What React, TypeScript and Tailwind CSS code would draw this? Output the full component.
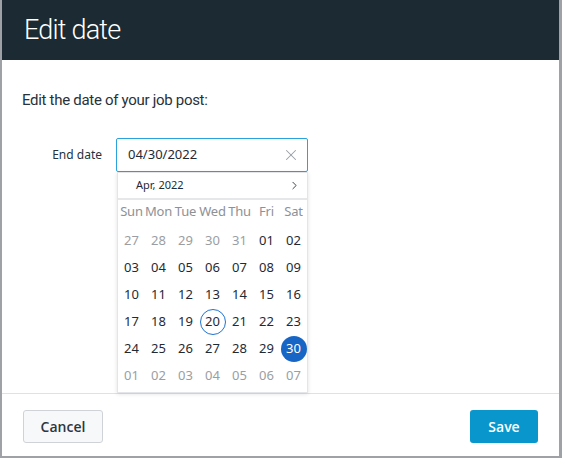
import { X, ChevronRight } from "lucide-react";

type Day = { n: string; muted?: boolean; today?: boolean; selected?: boolean };

const WEEKDAYS = ["Sun", "Mon", "Tue", "Wed", "Thu", "Fri", "Sat"];

function buildWeeks(): Day[][] {
  const days: Day[] = [];
  ["27", "28", "29", "30", "31"].forEach((n) => days.push({ n, muted: true }));
  for (let d = 1; d <= 30; d++) {
    days.push({ n: String(d).padStart(2, "0"), today: d === 20, selected: d === 30 });
  }
  ["01", "02", "03", "04", "05", "06", "07"].forEach((n) => days.push({ n, muted: true }));
  const weeks: Day[][] = [];
  for (let i = 0; i < days.length; i += 7) weeks.push(days.slice(i, i + 7));
  return weeks;
}

function Calendar() {
  const weeks = buildWeeks();
  return (
    <div className="absolute left-[1px] top-[34px] w-[191px] bg-white border border-[#e3e5e8] shadow-[0_1px_4px_rgba(0,0,0,0.12)] z-10 font-['Noto_Sans',sans-serif]">
      <div className="h-[27px] flex items-center justify-between pl-[18px] pr-[6px] border-b-2 border-[#e6e7e9]">
        <span className="text-[11px] text-[#1f2a33]">Apr, 2022</span>
        <ChevronRight size={13} strokeWidth={1.6} className="text-[#1f2a33]" />
      </div>
      <div className="grid grid-cols-7 h-[23px] items-center text-[13px] text-[#8d9196] tracking-[-0.2px]">
        {WEEKDAYS.map((w) => (
          <span key={w} className="text-center">{w}</span>
        ))}
      </div>
      <div className="pt-[4px] pb-[3px]">
        {weeks.map((week, i) => (
          <div key={i} className="grid grid-cols-7 h-[27px]">
            {week.map((d, j) => (
              <div key={j} className="flex items-center justify-center">
                <span
                  className={
                    d.selected
                      ? "w-[26px] h-[26px] rounded-full bg-[#1766c5] text-white flex items-center justify-center text-[13px]"
                      : d.today
                      ? "w-[26px] h-[26px] rounded-full border border-[#1e73d2] text-[#1f2a33] flex items-center justify-center text-[13px]"
                      : d.muted
                      ? "text-[13px] text-[#9a9ea3]"
                      : "text-[13px] text-[#1f2a33]"
                  }
                >
                  {d.n}
                </span>
              </div>
            ))}
          </div>
        ))}
      </div>
    </div>
  );
}

export default function App() {
  return (
    <div className="w-[562px] h-[458px] bg-[#9ea2a7] pl-[2px] pr-[3px] pb-[2px] overflow-hidden">
      <div className="h-full bg-white flex flex-col">
        <header className="h-[60px] shrink-0 bg-[#1b2a33] flex items-center px-[22px]">
          <h1 className="text-white text-[27px] font-light font-['Roboto',sans-serif] tracking-[-0.8px] leading-none">
            Edit date
          </h1>
        </header>

        <div className="flex-1 px-[20px] pt-[30px]">
          <p className="text-[15px] leading-[20px] text-[#27323a] font-['Roboto',sans-serif] tracking-[-0.3px]">
            Edit the date of your job post:
          </p>
          <div className="mt-[28px] flex items-center">
            <label className="w-[80px] text-right text-[12px] text-[#27323a] font-['Noto_Sans',sans-serif]">
              End date
            </label>
            <div className="relative ml-[14px] w-[192px]">
              <div className="h-[34px] border border-[#2aa3dc] rounded-[2px] flex items-center justify-between pl-[11px] pr-[7px] bg-white">
                <span className="text-[13px] text-[#1f2a33] font-['Noto_Sans',sans-serif]">04/30/2022</span>
                <X size={18} strokeWidth={1.4} className="text-[#9a9ea3]" />
              </div>
              <Calendar />
            </div>
          </div>
        </div>

        <footer className="h-[63px] shrink-0 border-t border-[#dfe1e4] flex items-start justify-between pt-[16px] px-[21px] font-['Open_Sans',sans-serif]">
          <button className="w-[80px] h-[33px] rounded-[3px] border border-[#cfd3d8] bg-[#f7f8f9] text-[14px] font-semibold text-[#2c363e]">
            Cancel
          </button>
          <button className="w-[68px] h-[33px] rounded-[3px] bg-[#0996cc] text-[14px] font-semibold text-white">
            Save
          </button>
        </footer>
      </div>
    </div>
  );
}
